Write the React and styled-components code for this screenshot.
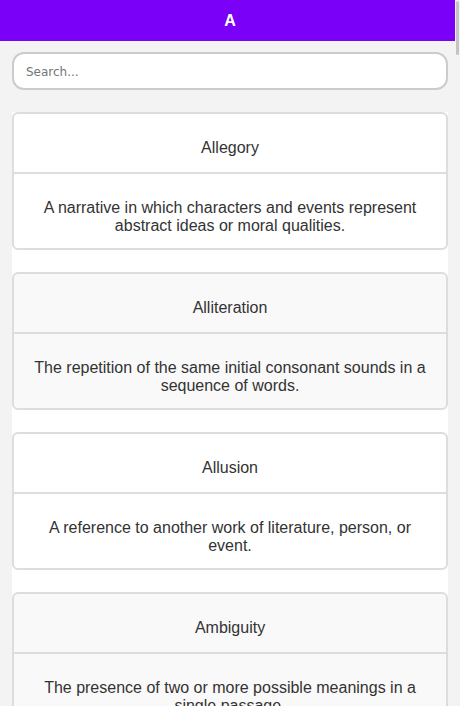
import React, { useState } from 'react';
import styled, { createGlobalStyle } from 'styled-components';

const GlobalStyle = createGlobalStyle`
  html, body {
    margin: 0;
    padding: 0;
    background: #f3f3f3;
    overflow: hidden;
  }
`;

// terms for the letter A
const terms = [
  { term: 'Allegory', definition: 'A narrative in which characters and events represent abstract ideas or moral qualities.' },
  { term: 'Alliteration', definition: 'The repetition of the same initial consonant sounds in a sequence of words.' },
  { term: 'Allusion', definition: 'A reference to another work of literature, person, or event.' },
  { term: 'Ambiguity', definition: 'The presence of two or more possible meanings in a single passage.' },
  { term: 'Amphibrach', definition: 'A metrical foot of three syllables with the stress on the middle one.' },
  { term: 'Amplification', definition: 'The expansion of a statement to add emphasis, detail or importance.' },
  { term: 'Anachronism', definition: 'Something placed in a time period to which it does not belong.' },
  { term: 'Anadiplosis', definition: 'The repetition of the last word of one clause at the start of the next.' },
  { term: 'Anagnorisis', definition: 'The moment in a story when a character makes a critical discovery.' },
  { term: 'Anagram', definition: 'A word or phrase formed by rearranging the letters of another.' },
  { term: 'Analepsis', definition: 'A scene that interrupts the narrative to show earlier events; a flashback.' },
  { term: 'Analogy', definition: 'A comparison between two things made to explain or clarify an idea.' },
  { term: 'Anapest', definition: 'A metrical foot of two unstressed syllables followed by a stressed one.' },
  { term: 'Anaphora', definition: 'The repetition of a word or phrase at the beginning of successive clauses.' },
  { term: 'Anastrophe', definition: 'The inversion of the usual order of words in a sentence.' },
  { term: 'Anecdote', definition: 'A short and amusing or interesting story about a real incident or person.' },
  { term: 'Antagonist', definition: 'A character or force that opposes the protagonist of a story.' },
  { term: 'Anthropomorphism', definition: 'The attribution of human traits or behaviour to animals or objects.' },
  { term: 'Antihero', definition: 'A central character who lacks conventional heroic qualities.' },
  { term: 'Antimetabole', definition: 'The repetition of words in successive clauses in reverse order.' },
  { term: 'Antiphrasis', definition: 'The use of a word in a sense opposite to its proper meaning.' },
  { term: 'Antistrophe', definition: 'The second section of an ode, answering the strophe.' },
  { term: 'Antithesis', definition: 'The juxtaposition of contrasting ideas in balanced phrases or clauses.' },
  { term: 'Antonomasia', definition: 'The substitution of an epithet or title for a proper name.' },
  { term: 'Aphorism', definition: 'A concise statement expressing a general truth or principle.' },
  { term: 'Apocope', definition: 'The omission of a sound or syllable at the end of a word.' },
  { term: 'Apologue', definition: 'A moral fable, especially one with animals as characters.' },
  { term: 'Apophasis', definition: 'Mentioning something by saying that it will not be mentioned.' },
  { term: 'Aporia', definition: 'An expression of real or feigned doubt about how to proceed.' },
  { term: 'Aposiopesis', definition: 'A sudden breaking off in the middle of a sentence.' },
  { term: 'Apostrophe', definition: 'A direct address to an absent person, an object or an abstract idea.' },
  { term: 'Archaism', definition: 'The use of a word or style that belongs to an earlier period.' },
  { term: 'Archetype', definition: 'A typical character, action or situation that recurs across literature.' },
  { term: 'Argument', definition: 'A short summary of the subject matter of a poem or chapter.' },
  { term: 'Ars Poetica', definition: 'A poem that explains the art of poetry or the nature of writing.' },
  { term: 'Aside', definition: 'A remark spoken by a character to the audience, unheard by others on stage.' },
  { term: 'Assonance', definition: 'The repetition of vowel sounds in nearby words.' },
  { term: 'Asyndeton', definition: 'The omission of conjunctions between words, phrases or clauses.' },
  { term: 'Atmosphere', definition: 'The mood or feeling created for the reader by a literary work.' },
  { term: 'Aubade', definition: 'A poem or song about lovers parting at dawn.' },
  { term: 'Audience', definition: 'The intended readers, listeners or viewers of a work.' },
  { term: 'Autobiography', definition: 'An account of a person\'s life written by that person.' },
  { term: 'Avant-garde', definition: 'New and experimental ideas and methods in art and literature.' },
  { term: 'Axiom', definition: 'A statement accepted as true as the basis for an argument.' },
];

const Screen = styled.div`
  height: 100vh;
  overflow-y: auto;
  scrollbar-width: none;
  background: #f3f3f3;
`;

// overlay scrollbar drawn over the right edge
const ScrollRail = styled.div`
  position: fixed;
  top: 0;
  right: 0;
  bottom: 0;
  width: 5px;
  background: #f3f3f3;
  pointer-events: none;
`;

const ScrollThumb = styled.div`
  margin: 1px 0 0 1px;
  width: 3px;
  height: 54px;
  border-radius: 2px;
  background: #c4c4c4;
`;

const Header = styled.header`
  height: 41px;
  display: flex;
  align-items: center;
  justify-content: center;
  background: #7b00f7;
  color: #fff;
  font-family: 'Liberation Sans', Arial, sans-serif;
  font-weight: bold;
  font-size: 16px;
`;

const Content = styled.main`
  padding: 11px 12px 0;
  display: flex;
  flex-direction: column;
  gap: 22px;
`;

const SearchInput = styled.input`
  box-sizing: border-box;
  width: 100%;
  height: 38px;
  padding: 1px 12px 0;
  border: 2px solid #cccccc;
  border-radius: 12px;
  background: #fff;
  font-family: 'DejaVu Sans', sans-serif;
  font-size: 12px;
  color: #333;
  outline: none;

  &::placeholder {
    color: #757575;
  }
`;

const TermList = styled.ul`
  list-style: none;
  margin: 0;
  padding: 0;
  background: #fff;
  display: flex;
  flex-direction: column;
  gap: 22px;
`;

const Card = styled.li`
  border: 2px solid #dddddd;
  border-radius: 6px;
  background: ${(p) => (p.$alt ? '#f9f9f9' : '#ffffff')};
  font-family: 'Liberation Sans', Arial, sans-serif;
  font-size: 16px;
  line-height: 18px;
  color: #333;
  text-align: center;
  overflow: hidden;
`;

const Term = styled.div`
  padding: 25px 20px 15px;
  border-bottom: 2px solid #dddddd;
`;

const Definition = styled.div`
  padding: 25px 20px 13px;
`;

const App = () => {
  const [search, setSearch] = useState('');

  const filtered = terms.filter((t) =>
    t.term.toLowerCase().includes(search.toLowerCase())
  );

  return (
    <>
      <GlobalStyle />
      <Screen>
        <Header>A</Header>
        <Content>
          <SearchInput
            type="text"
            placeholder="Search..."
            value={search}
            onChange={(e) => setSearch(e.target.value)}
          />
          <TermList>
            {filtered.map((t, i) => (
              <Card key={t.term} $alt={i % 2 === 1}>
                <Term>{t.term}</Term>
                <Definition>{t.definition}</Definition>
              </Card>
            ))}
          </TermList>
        </Content>
      </Screen>
      <ScrollRail>
        <ScrollThumb />
      </ScrollRail>
    </>
  );
};

export default App;
